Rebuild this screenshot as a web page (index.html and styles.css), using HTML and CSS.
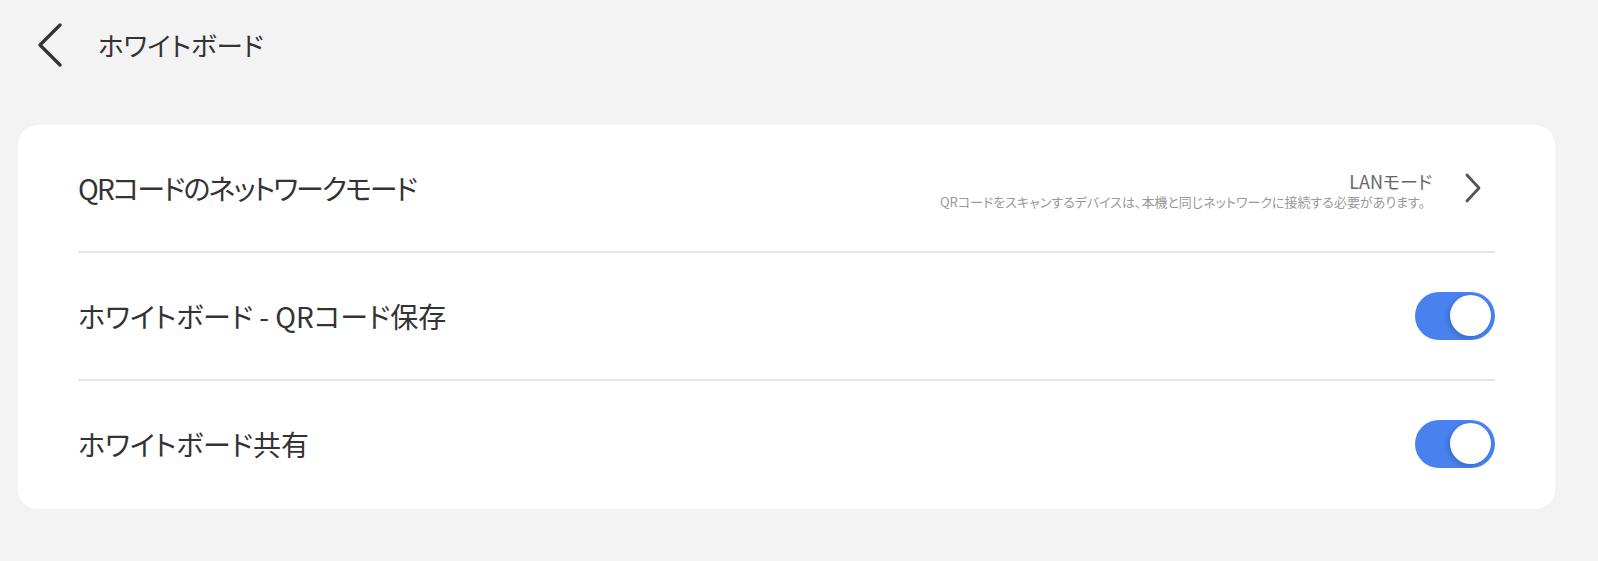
FILE: index.html
```html
<!DOCTYPE html>
<html lang="ja">
<head>
<meta charset="utf-8">
<link rel="stylesheet" href="styles.css">
</head>
<body>
<header class="top">
  <svg class="back" width="26" height="44" viewBox="0 0 26 44"><path d="M23 2 L3 22 L23 42" fill="none" stroke="#333" stroke-width="3.2" stroke-linecap="round" stroke-linejoin="round"/></svg>
  <h1 class="title">ホワイトボード</h1>
</header>
<main class="card">
  <div class="row">
    <span class="label narrow">QRコードのネットワークモード</span>
    <div class="right">
      <div class="info">
        <div class="value">LANモード</div>
        <div class="hint">QRコードをスキャンするデバイスは、本機と同じネットワークに接続する必要があります。</div>
      </div>
      <svg class="chev" width="18" height="32" viewBox="0 0 18 32"><path d="M3 3 L15 16 L3 29" fill="none" stroke="#555" stroke-width="2.8" stroke-linecap="round" stroke-linejoin="round"/></svg>
    </div>
  </div>
  <div class="row">
    <span class="label">ホワイトボード - QRコード保存</span>
    <div class="toggle"><div class="knob"></div></div>
  </div>
  <div class="row last">
    <span class="label">ホワイトボード共有</span>
    <div class="toggle"><div class="knob"></div></div>
  </div>
</main>
</body>
</html>
```
FILE: styles.css
```css
* { box-sizing: border-box; }
html, body { margin: 0; padding: 0; }
body {
  background: #f3f3f3;
  font-family: "Noto Sans CJK JP", "Noto Sans", sans-serif;
  font-feature-settings: "palt";
  color: #333;
  width: 1598px;
  height: 561px;
  overflow: hidden;
}
.top {
  height: 90px;
  display: flex;
  align-items: center;
  padding-left: 37px;
}
.back { display: block; }
.title {
  margin: 0 0 0 35px;
  font-size: 26.5px;
  font-weight: 400;
  line-height: 1;
  color: #333;
}
.card {
  margin: 35px 43px 0 18px;
  background: #fff;
  border-radius: 20px;
  padding: 0 60px 2px 60px;
}
.row {
  height: 128px;
  display: flex;
  align-items: center;
  justify-content: space-between;
  border-bottom: 2px solid #e6e6ea;
}
.row.last { border-bottom: none; height: 126px; }
.label {
  font-size: 28px;
  line-height: 1;
  color: #333;
}
.label.narrow { letter-spacing: -1.9px; }
.right {
  display: flex;
  align-items: center;
  padding-right: 13px;
}
.info {
  text-align: right;
  margin-right: 32px;
  margin-top: 4px;
}
.value {
  font-size: 18px;
  line-height: 20px;
  color: #666;
}
.hint {
  font-size: 13px;
  line-height: 16px;
  margin-top: 3px;
  padding-right: 7px;
  color: #999;
}
.chev { display: block; }
.toggle {
  position: relative;
  width: 80px;
  height: 48px;
  border-radius: 24px;
  background: #4882ef;
}
.knob {
  position: absolute;
  right: 4px;
  top: 3px;
  width: 41px;
  height: 41px;
  border-radius: 50%;
  background: #fff;
  box-shadow: -2px 2px 5px rgba(0,0,0,0.18);
}
```
